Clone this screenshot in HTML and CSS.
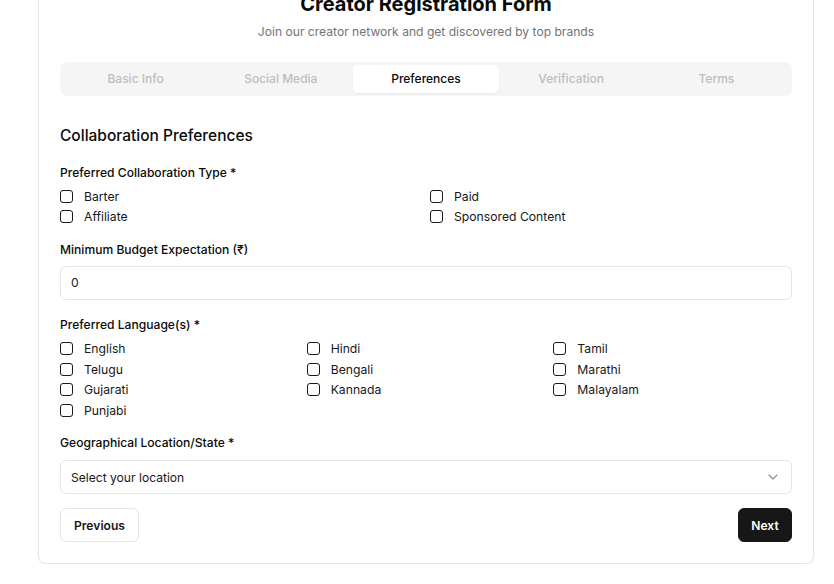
FILE: index.html
```html
<!DOCTYPE html>
<html>
<head>
<meta charset="utf-8">
<link rel="stylesheet" href="styles.css">
</head>
<body>
<div class="card">
  <h1 class="title">Creator Registration Form</h1>
  <p class="subtitle">Join our creator network and get discovered by top brands</p>
  <div class="tabs">
    <div class="tab">Basic Info</div>
    <div class="tab">Social Media</div>
    <div class="tab active">Preferences</div>
    <div class="tab">Verification</div>
    <div class="tab">Terms</div>
  </div>
  <h2 class="section">Collaboration Preferences</h2>

  <div class="field collab">
    <div class="label">Preferred Collaboration Type *</div>
    <div class="checks two">
      <label class="check"><span class="box"></span>Barter</label>
      <label class="check"><span class="box"></span>Paid</label>
      <label class="check"><span class="box"></span>Affiliate</label>
      <label class="check"><span class="box"></span>Sponsored Content</label>
    </div>
  </div>

  <div class="field budget">
    <div class="label">Minimum Budget Expectation (₹)</div>
    <div class="input">0</div>
  </div>

  <div class="field langs">
    <div class="label">Preferred Language(s) *</div>
    <div class="checks three">
      <label class="check"><span class="box"></span>English</label>
      <label class="check"><span class="box"></span>Hindi</label>
      <label class="check"><span class="box"></span>Tamil</label>
      <label class="check"><span class="box"></span>Telugu</label>
      <label class="check"><span class="box"></span>Bengali</label>
      <label class="check"><span class="box"></span>Marathi</label>
      <label class="check"><span class="box"></span>Gujarati</label>
      <label class="check"><span class="box"></span>Kannada</label>
      <label class="check"><span class="box"></span>Malayalam</label>
      <label class="check"><span class="box"></span>Punjabi</label>
    </div>
  </div>

  <div class="field">
    <div class="label">Geographical Location/State *</div>
    <div class="input select">
      <span>Select your location</span>
      <svg class="chev" width="10" height="6" viewBox="0 0 10 6"><path d="M1 1l4 4 4-4" fill="none" stroke="#8a8a8a" stroke-width="1.1" stroke-linecap="round" stroke-linejoin="round"/></svg>
    </div>
  </div>

  <div class="actions">
    <button class="btn prev">Previous</button>
    <button class="btn next">Next</button>
  </div>
</div>
</body>
</html>
```

FILE: styles.css
```css
* { box-sizing: border-box; }
html, body { margin: 0; padding: 0; background: #ffffff; }
body {
  font-family: Inter, "Noto Sans", "Liberation Sans", sans-serif;
  color: #171717;
  overflow: hidden;
}
.card {
  width: 776px;
  margin: -24px 0 0 38px;
  padding: 13px 21px 21px;
  border: 1px solid #e5e5e5;
  border-radius: 8px;
  box-shadow: 0 1px 2px rgba(0,0,0,0.05);
}
.title {
  margin: 0;
  text-align: center;
  font-size: 20px;
  line-height: 28px;
  font-weight: 700;
  color: #0a0a0a;
}
.subtitle {
  margin: 4px 0 0;
  text-align: center;
  font-size: 12.1px;
  line-height: 20px;
  color: #737373;
}
.tabs {
  margin-top: 20px;
  display: grid;
  grid-template-columns: repeat(5, 1fr);
  background: #f5f5f5;
  border-radius: 7px;
  padding: 3px;
  height: 34px;
}
.tab {
  display: flex;
  align-items: center;
  justify-content: center;
  padding-bottom: 1px;
  font-size: 12px;
  font-weight: 500;
  color: #bdbdbd;
  border-radius: 5px;
}
.tab.active {
  background: #ffffff;
  color: #0a0a0a;
  box-shadow: 0 1px 2px rgba(0,0,0,0.06);
}
.section {
  margin: 28px 0 0;
  font-size: 15.5px;
  line-height: 24px;
  font-weight: 500;
  color: #0a0a0a;
}
.field { margin-top: 14px; }
.section + .field { margin-top: 16px; }
.field.langs { margin-top: 16px; }
.label {
  font-size: 12.1px;
  line-height: 18px;
  font-weight: 500;
  color: #0a0a0a;
}
.checks {
  margin-top: 5px;
  display: grid;
  column-gap: 8px;
  row-gap: 0.5px;
}
.collab .checks { margin-top: 4px; }
.checks.two { grid-template-columns: 1fr 1fr; }
.checks.three { grid-template-columns: 1fr 1fr 1fr; }
.check {
  display: flex;
  align-items: center;
  height: 20px;
  font-size: 12.2px;
  color: #171717;
}
.box {
  width: 13px;
  height: 13px;
  border: 1px solid #1a1a1a;
  border-radius: 3px;
  margin-right: 11px;
  flex: none;
}
.input {
  margin-top: 8px;
  height: 34px;
  border: 1px solid #e5e5e5;
  border-radius: 6px;
  padding: 0 10px;
  display: flex;
  align-items: center;
  font-size: 12.1px;
  color: #171717;
}
.budget .input { margin-top: 7px; }
.select { justify-content: space-between; padding-right: 13px; }
.chev { display: block; }
.actions {
  margin-top: 14px;
  display: flex;
  justify-content: space-between;
}
.btn {
  font-family: inherit;
  height: 34px;
  border-radius: 6px;
  font-size: 12.1px;
  font-weight: 600;
  padding: 0;
  cursor: pointer;
}
.prev {
  width: 79px;
  background: #ffffff;
  border: 1px solid #e5e5e5;
  color: #171717;
}
.next {
  width: 54px;
  background: #171717;
  border: 1px solid #171717;
  color: #ffffff;
}
```
